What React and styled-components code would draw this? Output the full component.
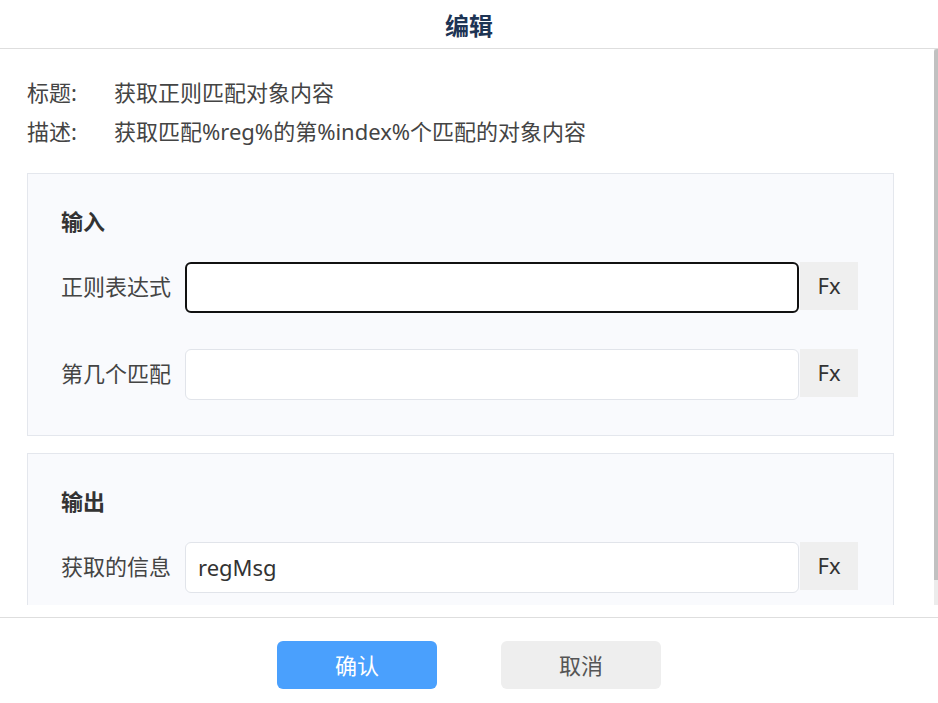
import React from 'react';
import styled, { createGlobalStyle } from 'styled-components';

const GlobalStyle = createGlobalStyle`
  html, body {
    margin: 0;
    padding: 0;
    background: #fff;
    font-family: "Noto Sans", "Noto Sans CJK SC", sans-serif;
  }
  * { box-sizing: border-box; }
`;

const Dialog = styled.div`
  width: 938px;
  height: 703px;
  display: flex;
  flex-direction: column;
  background: #fff;
  overflow: hidden;
`;

const Header = styled.div`
  height: 49px;
  flex-shrink: 0;
  border-bottom: 1px solid #dedede;
  display: flex;
  align-items: center;
  justify-content: center;
  font-size: 24px;
  font-weight: 700;
  color: #1d3454;
`;

const BodyWrap = styled.div`
  position: relative;
  height: 556px;
  flex-shrink: 0;
`;

const Body = styled.div`
  height: 100%;
  overflow: hidden;
  padding: 24px 44px 0 27px;
`;

// faux scrollbar: the headless browser uses overlay scrollbars
const ScrollTrack = styled.div`
  position: absolute;
  top: 0;
  right: 0;
  bottom: 0;
  width: 4px;
  background: #ececec;
`;

const ScrollThumb = styled.div`
  height: 531px;
  background: #c1c1c1;
  border-top-left-radius: 3px;
`;

const InfoLine = styled.div`
  display: flex;
  font-size: 22px;
  line-height: 39px;
  color: #444;
`;

const InfoKey = styled.span`
  width: 87px;
  flex-shrink: 0;
`;

const Panel = styled.section`
  margin-top: ${p => p.$gap}px;
  background: #f9fafd;
  border: 1px solid #e4e7ed;
  padding: 31px 35px 35px 33px;
  display: flex;
  flex-direction: column;
  gap: 36px;
`;

const PanelTitle = styled.h3`
  margin: 0 0 -12px;
  font-size: 22px;
  line-height: 33px;
  font-weight: 700;
  color: #333;
`;

const Row = styled.div`
  display: flex;
  align-items: flex-start;
`;

const Label = styled.label`
  width: 124px;
  flex-shrink: 0;
  font-size: 22px;
  line-height: 49px;
  color: #444;
  white-space: nowrap;
`;

const Field = styled.div`
  flex: 1;
  height: 51px;
  background: #fff;
  border: ${p => (p.$focused ? '2px solid #111' : '1px solid #e1e4ea')};
  border-radius: 6px;
  padding: 0 ${p => (p.$focused ? 11 : 12)}px 2px;
  display: flex;
  align-items: center;
  font-size: 22px;
  color: #333;
`;

const FxButton = styled.div`
  width: 58px;
  height: 48px;
  flex-shrink: 0;
  margin-left: 1px;
  padding-bottom: 2px;
  background: #efefef;
  display: flex;
  align-items: center;
  justify-content: center;
  font-size: 22px;
  color: #333;
`;

const Footer = styled.div`
  margin-top: 12px;
  flex: 1;
  border-top: 1px solid #dedede;
  padding-top: 23px;
  display: flex;
  justify-content: center;
  gap: 64px;
`;

const Button = styled.button`
  width: 160px;
  height: 48px;
  border: none;
  border-radius: 6px;
  padding: 0 0 2px;
  font-family: inherit;
  font-size: 22px;
  background: ${p => (p.$primary ? '#4aa0fd' : '#eeeeee')};
  color: ${p => (p.$primary ? '#fff' : '#555')};
  cursor: pointer;
`;

const FieldRow = ({ label, value, focused }) => (
  <Row>
    <Label>{label}</Label>
    <Field $focused={focused}>{value}</Field>
    <FxButton>Fx</FxButton>
  </Row>
);

export default function App() {
  return (
    <>
      <GlobalStyle />
      <Dialog>
        <Header>编辑</Header>
        <BodyWrap>
          <Body>
            <InfoLine>
              <InfoKey>标题:</InfoKey>
              <span>获取正则匹配对象内容</span>
            </InfoLine>
            <InfoLine>
              <InfoKey>描述:</InfoKey>
              <span>获取匹配%reg%的第%index%个匹配的对象内容</span>
            </InfoLine>

            <Panel $gap={22}>
              <PanelTitle>输入</PanelTitle>
              <FieldRow label="正则表达式" focused />
              <FieldRow label="第几个匹配" />
            </Panel>

            <Panel $gap={17}>
              <PanelTitle>输出</PanelTitle>
              <FieldRow label="获取的信息" value="regMsg" />
            </Panel>
          </Body>
          <ScrollTrack>
            <ScrollThumb />
          </ScrollTrack>
        </BodyWrap>
        <Footer>
          <Button $primary>确认</Button>
          <Button>取消</Button>
        </Footer>
      </Dialog>
    </>
  );
}
